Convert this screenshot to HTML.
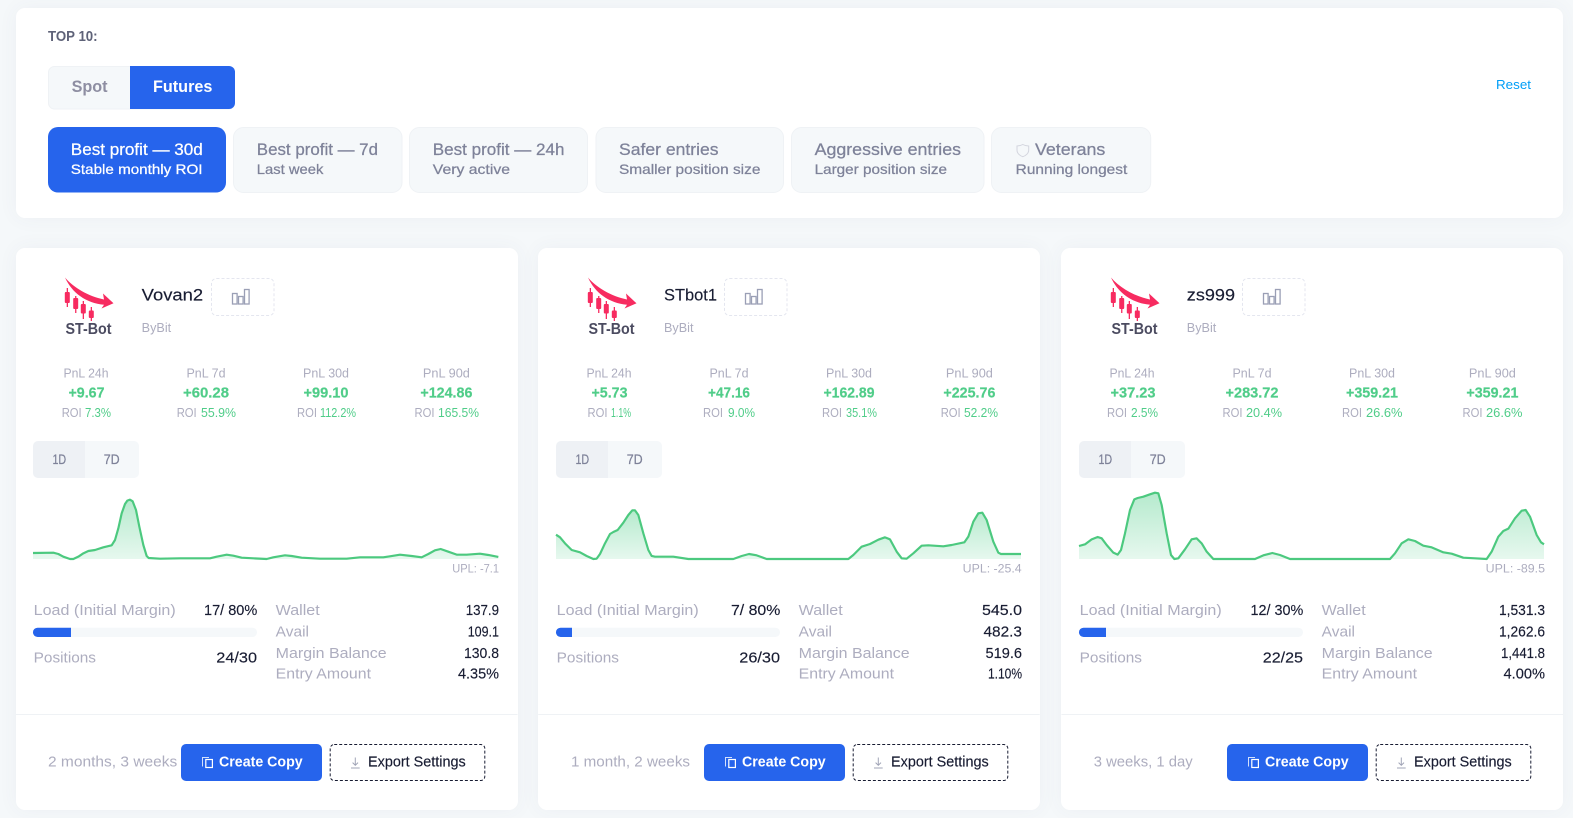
<!DOCTYPE html>
<html lang="en"><head><meta charset="utf-8"><title>Top 10</title>
<style>
html,body{margin:0;padding:0;width:1573px;height:818px;overflow:hidden;background:#f5f8fa}
.p{position:absolute;background:#fff;border-radius:9px;box-shadow:0 0 20px rgba(76,87,125,.05)}
svg{position:absolute;left:0;top:0}
text{font-family:"Liberation Sans",sans-serif;font-size:13px;fill:#adadbf}
.d{fill:#181c32;stroke:#181c32;stroke-width:.15}
.g{fill:#50cd89}
.b{font-weight:700}
.w{fill:#fff;stroke:#fff;stroke-width:.25}
.c{fill:#7e8299;stroke:#7e8299;stroke-width:.25}
.t{font-size:16.5px}
.s{font-size:14px}
.l{font-size:15px}
.v{font-size:15px;fill:#181c32;stroke:#181c32;stroke-width:.15}
.x{font-size:12.5px;text-anchor:middle}
.y{font-size:14.5px;font-weight:700;fill:#50cd89;stroke:#50cd89;stroke-width:.2;text-anchor:middle}
</style></head><body>
<div class="p" style="left:16px;top:8px;width:1547px;height:210px"></div>
<div class="p" style="left:16px;top:248px;width:501.5px;height:561.5px"></div>
<div class="p" style="left:538.2px;top:248px;width:501.5px;height:561.5px"></div>
<div class="p" style="left:1061.4px;top:248px;width:501.6px;height:561.5px"></div>
<svg width="1573" height="818" viewBox="0 0 1573 818" xmlns="http://www.w3.org/2000/svg">
<defs>
<linearGradient id="gr" x1="0" y1="0" x2="0" y2="1"><stop offset="0" stop-color="#50cd89" stop-opacity=".42"/><stop offset="1" stop-color="#50cd89" stop-opacity=".14"/></linearGradient>
<g id="logo">
<path d="M65 277.5C74 288 88 296 104 299.5L103 293.5L113.5 303.3L101.5 308.5L104 304.8C86 303 72 293 65 277.5Z" fill="#f72b60"/>
<g fill="#f72b60">
<rect x="64.8" y="292" width="5" height="11" rx="1"/><rect x="66.7" y="288" width="1.3" height="19"/>
<rect x="73.2" y="298" width="5" height="11" rx="1"/><rect x="75.1" y="296" width="1.3" height="17"/>
<rect x="80.8" y="304" width="5" height="9.5" rx="1"/><rect x="82.7" y="301" width="1.3" height="18"/>
<rect x="88.8" y="310.5" width="5" height="7.5" rx="1"/><rect x="90.7" y="307" width="1.3" height="14"/>
</g></g>
<g id="bars" fill="none" stroke="#9a9fb5" stroke-width="1.3">
<rect x="232.5" y="293.5" width="4.6" height="10.5"/><rect x="238.5" y="296.5" width="4.6" height="7.5"/><rect x="244.5" y="289.5" width="4.6" height="14.5"/>
</g>
<g id="foot">
<rect x="181" y="744" width="141" height="37" rx="5" fill="#2664ec"/>
<rect x="330.2" y="744.5" width="154.6" height="36" rx="4" fill="#fff" stroke="#181c32" stroke-width="1" stroke-dasharray="3 2"/>
<path d="M202.5 766.5V757.5H209" fill="none" stroke="#fff" stroke-width="1" opacity=".8"/>
<rect x="205.8" y="759.5" width="6.6" height="8" fill="none" stroke="#fff" stroke-width="1.2"/>
<path d="M355.3 757.5V765.2M352.6 762.6L355.3 765.3L358 762.6M351 768H359.7" fill="none" stroke="#a1a5b7" stroke-width="1"/>
</g>
</defs>

<!-- top panel -->
<text x="48" y="41" class="b" style="fill:#5e6278;font-size:14.5px" textLength="49.6" lengthAdjust="spacingAndGlyphs">TOP 10:</text>
<rect x="48.5" y="66.5" width="186" height="42.5" rx="6" fill="#f5f8fa" stroke="#eff2f5"/>
<path d="M130 66H229a6 6 0 0 1 6 6V103a6 6 0 0 1-6 6H130Z" fill="#2664ec"/>
<text x="71.6" y="92" class="b t" style="fill:#8e8ea2" textLength="36" lengthAdjust="spacingAndGlyphs">Spot</text>
<text x="153" y="92" class="b t" style="fill:#fff" textLength="59.4" lengthAdjust="spacingAndGlyphs">Futures</text>
<text x="1496" y="89" style="fill:#009ef7;font-size:13px" textLength="35" lengthAdjust="spacingAndGlyphs">Reset</text>

<rect x="48" y="127" width="178" height="65.5" rx="10" fill="#2664ec"/>
<text x="70.8" y="155" class="t w" textLength="132" lengthAdjust="spacingAndGlyphs">Best profit — 30d</text>
<text x="70.8" y="174" class="s w" textLength="131.7" lengthAdjust="spacingAndGlyphs">Stable monthly ROI</text>

<rect x="233.5" y="127.5" width="168.5" height="65" rx="10" fill="#f5f8fa" stroke="#eff2f5"/>
<text x="256.8" y="155" class="t c" textLength="121.2" lengthAdjust="spacingAndGlyphs">Best profit — 7d</text>
<text x="256.8" y="174" class="s c" textLength="66.6" lengthAdjust="spacingAndGlyphs">Last week</text>

<rect x="409.5" y="127.5" width="178" height="65" rx="10" fill="#f5f8fa" stroke="#eff2f5"/>
<text x="432.8" y="155" class="t c" textLength="131.7" lengthAdjust="spacingAndGlyphs">Best profit — 24h</text>
<text x="432.8" y="174" class="s c" textLength="77.2" lengthAdjust="spacingAndGlyphs">Very active</text>

<rect x="596" y="127.5" width="187.5" height="65" rx="10" fill="#f5f8fa" stroke="#eff2f5"/>
<text x="619" y="155" class="t c" textLength="99.5" lengthAdjust="spacingAndGlyphs">Safer entries</text>
<text x="619" y="174" class="s c" textLength="141.4" lengthAdjust="spacingAndGlyphs">Smaller position size</text>

<rect x="791.5" y="127.5" width="192.5" height="65" rx="10" fill="#f5f8fa" stroke="#eff2f5"/>
<text x="814.6" y="155" class="t c" textLength="146.4" lengthAdjust="spacingAndGlyphs">Aggressive entries</text>
<text x="814.6" y="174" class="s c" textLength="132.4" lengthAdjust="spacingAndGlyphs">Larger position size</text>

<rect x="991.5" y="127.5" width="159.2" height="65" rx="10" fill="#f5f8fa" stroke="#eff2f5"/>
<path d="M1022.8 144.5C1021 145.5 1019 146 1017 146V150C1017 153.5 1020 155.8 1022.8 156.7C1025.6 155.8 1028.7 153.5 1028.7 150V146C1026.6 146 1024.6 145.5 1022.8 144.5Z" fill="none" stroke="#d3d5de" stroke-width="1"/>
<text x="1035" y="155" class="t c" textLength="70.3" lengthAdjust="spacingAndGlyphs">Veterans</text>
<text x="1015.7" y="174" class="s c" textLength="111.6" lengthAdjust="spacingAndGlyphs">Running longest</text>

<!-- charts -->
<g transform="translate(20 430) scale(.33333)">
<path fill="url(#gr)" d="M39 387V369L100 368 115 372 130 380 150 387 160 387 175 380 190 370 205 363 225 360 250 352 275 346 285 330 295 295 305 250 315 222 322 212 330 209 338 214 348 240 358 290 370 345 380 378 386 384 420 386 480 385 570 385 590 380 620 374 640 377 665 383 700 385 740 387 760 382 795 376 815 378 845 383 900 386 980 386 1020 382 1090 382 1110 379 1140 374 1175 378 1205 382 1225 372 1245 361 1262 357 1285 365 1310 374 1340 374 1380 371 1405 375 1435 381V387Z"/>
<path fill="none" stroke="#4cc97f" stroke-width="6.5" stroke-linejoin="round" d="M39 369L100 368 115 372 130 380 150 387 160 387 175 380 190 370 205 363 225 360 250 352 275 346 285 330 295 295 305 250 315 222 322 212 330 209 338 214 348 240 358 290 370 345 380 378 386 384 420 386 480 385 570 385 590 380 620 374 640 377 665 383 700 385 740 387 760 382 795 376 815 378 845 383 900 386 980 386 1020 382 1090 382 1110 379 1140 374 1175 378 1205 382 1225 372 1245 361 1262 357 1285 365 1310 374 1340 374 1380 371 1405 375 1435 381"/>
</g>
<g transform="translate(545 430) scale(.33333)">
<path fill="url(#gr)" d="M33 387V314L45 322 60 340 80 360 105 367 125 378 145 387 155 386 165 372 180 340 195 312 205 306 218 300 235 278 250 255 262 241 270 241 280 255 295 310 310 360 320 378 330 380 385 380 430 387 565 387 590 378 612 372 635 376 665 387 910 387 925 375 950 350 975 342 1000 329 1020 322 1035 328 1055 365 1070 385 1085 386 1105 370 1130 347 1150 346 1195 349 1220 345 1258 337 1270 320 1285 275 1300 250 1312 248 1325 270 1345 335 1360 368 1368 372 1428 372V387Z"/>
<path fill="none" stroke="#4cc97f" stroke-width="6.5" stroke-linejoin="round" d="M33 314L45 322 60 340 80 360 105 367 125 378 145 387 155 386 165 372 180 340 195 312 205 306 218 300 235 278 250 255 262 241 270 241 280 255 295 310 310 360 320 378 330 380 385 380 430 387 565 387 590 378 612 372 635 376 665 387 910 387 925 375 950 350 975 342 1000 329 1020 322 1035 328 1055 365 1070 385 1085 386 1105 370 1130 347 1150 346 1195 349 1220 345 1258 337 1270 320 1285 275 1300 250 1312 248 1325 270 1345 335 1360 368 1368 372 1428 372"/>
</g>
<g transform="translate(1065 430) scale(.33333)">
<path fill="url(#gr)" d="M42 387V348L60 343 80 328 98 321 110 325 125 345 145 368 158 374 168 360 180 310 195 240 208 208 218 204 235 200 255 193 270 188 280 190 290 225 305 310 318 375 328 387 340 385 360 358 380 328 395 325 410 340 425 365 445 387 570 387 595 376 622 369 645 375 675 387 975 387 990 370 1010 340 1030 328 1050 333 1075 347 1100 352 1135 367 1160 371 1195 383 1230 385 1265 387 1280 365 1300 320 1315 303 1330 296 1350 265 1370 242 1382 240 1395 260 1415 315 1428 337 1437 343V387Z"/>
<path fill="none" stroke="#4cc97f" stroke-width="6.5" stroke-linejoin="round" d="M42 348L60 343 80 328 98 321 110 325 125 345 145 368 158 374 168 360 180 310 195 240 208 208 218 204 235 200 255 193 270 188 280 190 290 225 305 310 318 375 328 387 340 385 360 358 380 328 395 325 410 340 425 365 445 387 570 387 595 376 622 369 645 375 675 387 975 387 990 370 1010 340 1030 328 1050 333 1075 347 1100 352 1135 367 1160 371 1195 383 1230 385 1265 387 1280 365 1300 320 1315 303 1330 296 1350 265 1370 242 1382 240 1395 260 1415 315 1428 337 1437 343"/>
</g>

<!-- card 1 -->
<g>
<use href="#logo"/>
<text x="65.5" y="334" class="b" style="fill:#4b4b60;font-size:15.5px" textLength="46" lengthAdjust="spacingAndGlyphs">ST-Bot</text>
<text x="141.7" y="300.5" class="d" style="font-size:17px" textLength="61.5" lengthAdjust="spacingAndGlyphs">Vovan2</text>
<text x="141.7" y="332" style="font-size:12.5px" textLength="29.5" lengthAdjust="spacingAndGlyphs">ByBit</text>
<rect x="211.5" y="278.5" width="62.5" height="37" rx="5" fill="#fff" stroke="#e4e6ef" stroke-dasharray="3 2"/>
<use href="#bars"/>

<text x="86" y="377.7" class="x" textLength="45" lengthAdjust="spacingAndGlyphs">PnL 24h</text>
<text x="206" y="377.7" class="x" textLength="39" lengthAdjust="spacingAndGlyphs">PnL 7d</text>
<text x="326" y="377.7" class="x" textLength="46" lengthAdjust="spacingAndGlyphs">PnL 30d</text>
<text x="446.4" y="377.7" class="x" textLength="47" lengthAdjust="spacingAndGlyphs">PnL 90d</text>
<text x="86.5" y="397.7" class="y" textLength="36" lengthAdjust="spacingAndGlyphs">+9.67</text>
<text x="206" y="397.7" class="y" textLength="46" lengthAdjust="spacingAndGlyphs">+60.28</text>
<text x="326" y="397.7" class="y" textLength="45" lengthAdjust="spacingAndGlyphs">+99.10</text>
<text x="446.4" y="397.7" class="y" textLength="52" lengthAdjust="spacingAndGlyphs">+124.86</text>
<text x="61.7" y="417" style="font-size:12.5px" textLength="20" lengthAdjust="spacingAndGlyphs">ROI</text><text x="85" y="417" class="g" style="font-size:12.5px" textLength="26" lengthAdjust="spacingAndGlyphs">7.3%</text>
<text x="176.7" y="417" style="font-size:12.5px" textLength="20" lengthAdjust="spacingAndGlyphs">ROI</text><text x="201" y="417" class="g" style="font-size:12.5px" textLength="35" lengthAdjust="spacingAndGlyphs">55.9%</text>
<text x="297" y="417" style="font-size:12.5px" textLength="20" lengthAdjust="spacingAndGlyphs">ROI</text><text x="320" y="417" class="g" style="font-size:12.5px" textLength="36" lengthAdjust="spacingAndGlyphs">112.2%</text>
<text x="414.5" y="417" style="font-size:12.5px" textLength="20" lengthAdjust="spacingAndGlyphs">ROI</text><text x="438" y="417" class="g" style="font-size:12.5px" textLength="41" lengthAdjust="spacingAndGlyphs">165.5%</text>

<path d="M85 441H38a5 5 0 0 0-5 5V473a5 5 0 0 0 5 5H85Z" fill="#eef1f5"/>
<path d="M85 441H134a5 5 0 0 1 5 5V473a5 5 0 0 1-5 5H85Z" fill="#f5f8fa"/>
<text x="59.3" y="464" class="c" style="font-size:14px;text-anchor:middle" textLength="13.7" lengthAdjust="spacingAndGlyphs">1D</text>
<text x="111.7" y="464" class="c" style="font-size:14px;text-anchor:middle" textLength="16" lengthAdjust="spacingAndGlyphs">7D</text>
<text x="452.3" y="572.7" style="font-size:12px" textLength="46.7" lengthAdjust="spacingAndGlyphs">UPL: -7.1</text>

<text x="33.7" y="615" class="l" textLength="142" lengthAdjust="spacingAndGlyphs">Load (Initial Margin)</text>
<text x="204" y="615" class="v" textLength="53.3" lengthAdjust="spacingAndGlyphs">17/ 80%</text>
<rect x="33" y="627.7" width="224" height="9.3" rx="4.6" fill="#f5f8fa"/>
<path d="M71 627.7H37.6a4.6 4.6 0 0 0 0 9.3H71Z" fill="#2664ec"/>
<text x="33.7" y="662.7" class="l" textLength="62.3" lengthAdjust="spacingAndGlyphs">Positions</text>
<text x="216.3" y="662.7" class="v" textLength="40.7" lengthAdjust="spacingAndGlyphs">24/30</text>
<text x="275.7" y="615" class="l" textLength="44" lengthAdjust="spacingAndGlyphs">Wallet</text>
<text x="275.7" y="636.3" class="l" textLength="33.3" lengthAdjust="spacingAndGlyphs">Avail</text>
<text x="275.7" y="658" class="l" textLength="111" lengthAdjust="spacingAndGlyphs">Margin Balance</text>
<text x="275.7" y="678.7" class="l" textLength="95.3" lengthAdjust="spacingAndGlyphs">Entry Amount</text>
<text x="465.7" y="615" class="v" textLength="33.3" lengthAdjust="spacingAndGlyphs">137.9</text>
<text x="467.7" y="636.3" class="v" textLength="31.3" lengthAdjust="spacingAndGlyphs">109.1</text>
<text x="464" y="658" class="v" textLength="35" lengthAdjust="spacingAndGlyphs">130.8</text>
<text x="458" y="678.7" class="v" textLength="41" lengthAdjust="spacingAndGlyphs">4.35%</text>
<rect x="16" y="714" width="501.5" height="1" fill="#eff2f5"/>
<text x="48" y="766.7" class="l" textLength="129.3" lengthAdjust="spacingAndGlyphs">2 months, 3 weeks</text>
<use href="#foot"/>
<text x="219" y="766.7" class="b" style="fill:#fff;font-size:14.5px" textLength="83.7" lengthAdjust="spacingAndGlyphs">Create Copy</text>
<text x="368" y="766.7" class="d" style="font-size:14.5px" textLength="97.7" lengthAdjust="spacingAndGlyphs">Export Settings</text>
</g>

<!-- card 2 -->
<g transform="translate(523 0)">
<use href="#logo"/>
<text x="65.5" y="334" class="b" style="fill:#4b4b60;font-size:15.5px" textLength="46" lengthAdjust="spacingAndGlyphs">ST-Bot</text>
<text x="141" y="300.5" class="d" style="font-size:17px" textLength="53" lengthAdjust="spacingAndGlyphs">STbot1</text>
<text x="141" y="332" style="font-size:12.5px" textLength="29.5" lengthAdjust="spacingAndGlyphs">ByBit</text>
<rect x="201.5" y="278.5" width="62.5" height="37" rx="5" fill="#fff" stroke="#e4e6ef" stroke-dasharray="3 2"/>
<use href="#bars" x="-10"/>

<text x="86" y="377.7" class="x" textLength="45" lengthAdjust="spacingAndGlyphs">PnL 24h</text>
<text x="206" y="377.7" class="x" textLength="39" lengthAdjust="spacingAndGlyphs">PnL 7d</text>
<text x="326" y="377.7" class="x" textLength="46" lengthAdjust="spacingAndGlyphs">PnL 30d</text>
<text x="446.4" y="377.7" class="x" textLength="47" lengthAdjust="spacingAndGlyphs">PnL 90d</text>
<text x="86.5" y="397.7" class="y" textLength="36" lengthAdjust="spacingAndGlyphs">+5.73</text>
<text x="206" y="397.7" class="y" textLength="42" lengthAdjust="spacingAndGlyphs">+47.16</text>
<text x="326" y="397.7" class="y" textLength="51" lengthAdjust="spacingAndGlyphs">+162.89</text>
<text x="446.4" y="397.7" class="y" textLength="52" lengthAdjust="spacingAndGlyphs">+225.76</text>
<text x="64.5" y="417" style="font-size:12.5px" textLength="20" lengthAdjust="spacingAndGlyphs">ROI</text><text x="88" y="417" class="g" style="font-size:12.5px" textLength="20" lengthAdjust="spacingAndGlyphs">1.1%</text>
<text x="180" y="417" style="font-size:12.5px" textLength="20" lengthAdjust="spacingAndGlyphs">ROI</text><text x="205" y="417" class="g" style="font-size:12.5px" textLength="27" lengthAdjust="spacingAndGlyphs">9.0%</text>
<text x="299" y="417" style="font-size:12.5px" textLength="20" lengthAdjust="spacingAndGlyphs">ROI</text><text x="323" y="417" class="g" style="font-size:12.5px" textLength="31" lengthAdjust="spacingAndGlyphs">35.1%</text>
<text x="417.7" y="417" style="font-size:12.5px" textLength="20" lengthAdjust="spacingAndGlyphs">ROI</text><text x="441" y="417" class="g" style="font-size:12.5px" textLength="34" lengthAdjust="spacingAndGlyphs">52.2%</text>

<path d="M85 441H38a5 5 0 0 0-5 5V473a5 5 0 0 0 5 5H85Z" fill="#eef1f5"/>
<path d="M85 441H134a5 5 0 0 1 5 5V473a5 5 0 0 1-5 5H85Z" fill="#f5f8fa"/>
<text x="59.3" y="464" class="c" style="font-size:14px;text-anchor:middle" textLength="13.7" lengthAdjust="spacingAndGlyphs">1D</text>
<text x="111.7" y="464" class="c" style="font-size:14px;text-anchor:middle" textLength="16" lengthAdjust="spacingAndGlyphs">7D</text>
<text x="439.7" y="572.7" style="font-size:12px" textLength="59" lengthAdjust="spacingAndGlyphs">UPL: -25.4</text>

<text x="33.7" y="615" class="l" textLength="142" lengthAdjust="spacingAndGlyphs">Load (Initial Margin)</text>
<text x="208" y="615" class="v" textLength="49.3" lengthAdjust="spacingAndGlyphs">7/ 80%</text>
<rect x="33" y="627.7" width="224" height="9.3" rx="4.6" fill="#f5f8fa"/>
<path d="M49 627.7H37.6a4.6 4.6 0 0 0 0 9.3H49Z" fill="#2664ec"/>
<text x="33.7" y="662.7" class="l" textLength="62.3" lengthAdjust="spacingAndGlyphs">Positions</text>
<text x="216.3" y="662.7" class="v" textLength="40.7" lengthAdjust="spacingAndGlyphs">26/30</text>
<text x="275.7" y="615" class="l" textLength="44" lengthAdjust="spacingAndGlyphs">Wallet</text>
<text x="275.7" y="636.3" class="l" textLength="33.3" lengthAdjust="spacingAndGlyphs">Avail</text>
<text x="275.7" y="658" class="l" textLength="111" lengthAdjust="spacingAndGlyphs">Margin Balance</text>
<text x="275.7" y="678.7" class="l" textLength="95.3" lengthAdjust="spacingAndGlyphs">Entry Amount</text>
<text x="459" y="615" class="v" textLength="40" lengthAdjust="spacingAndGlyphs">545.0</text>
<text x="460.5" y="636.3" class="v" textLength="38.5" lengthAdjust="spacingAndGlyphs">482.3</text>
<text x="462.5" y="658" class="v" textLength="36.5" lengthAdjust="spacingAndGlyphs">519.6</text>
<text x="465" y="678.7" class="v" textLength="34" lengthAdjust="spacingAndGlyphs">1.10%</text>
<rect x="15.2" y="714" width="501.5" height="1" fill="#eff2f5"/>
<text x="48" y="766.7" class="l" textLength="119" lengthAdjust="spacingAndGlyphs">1 month, 2 weeks</text>
<use href="#foot"/>
<text x="219" y="766.7" class="b" style="fill:#fff;font-size:14.5px" textLength="83.7" lengthAdjust="spacingAndGlyphs">Create Copy</text>
<text x="368" y="766.7" class="d" style="font-size:14.5px" textLength="97.7" lengthAdjust="spacingAndGlyphs">Export Settings</text>
</g>

<!-- card 3 -->
<g transform="translate(1046 0)">
<use href="#logo"/>
<text x="65.5" y="334" class="b" style="fill:#4b4b60;font-size:15.5px" textLength="46" lengthAdjust="spacingAndGlyphs">ST-Bot</text>
<text x="140.8" y="300.5" class="d" style="font-size:17px" textLength="48.2" lengthAdjust="spacingAndGlyphs">zs999</text>
<text x="140.8" y="332" style="font-size:12.5px" textLength="29.5" lengthAdjust="spacingAndGlyphs">ByBit</text>
<rect x="196.5" y="278.5" width="62.5" height="37" rx="5" fill="#fff" stroke="#e4e6ef" stroke-dasharray="3 2"/>
<use href="#bars" x="-15"/>

<text x="86" y="377.7" class="x" textLength="45" lengthAdjust="spacingAndGlyphs">PnL 24h</text>
<text x="206" y="377.7" class="x" textLength="39" lengthAdjust="spacingAndGlyphs">PnL 7d</text>
<text x="326" y="377.7" class="x" textLength="46" lengthAdjust="spacingAndGlyphs">PnL 30d</text>
<text x="446.4" y="377.7" class="x" textLength="47" lengthAdjust="spacingAndGlyphs">PnL 90d</text>
<text x="87" y="397.7" class="y" textLength="45" lengthAdjust="spacingAndGlyphs">+37.23</text>
<text x="206" y="397.7" class="y" textLength="53" lengthAdjust="spacingAndGlyphs">+283.72</text>
<text x="326" y="397.7" class="y" textLength="52" lengthAdjust="spacingAndGlyphs">+359.21</text>
<text x="446.4" y="397.7" class="y" textLength="52" lengthAdjust="spacingAndGlyphs">+359.21</text>
<text x="61" y="417" style="font-size:12.5px" textLength="20" lengthAdjust="spacingAndGlyphs">ROI</text><text x="85" y="417" class="g" style="font-size:12.5px" textLength="27" lengthAdjust="spacingAndGlyphs">2.5%</text>
<text x="176.5" y="417" style="font-size:12.5px" textLength="20" lengthAdjust="spacingAndGlyphs">ROI</text><text x="200" y="417" class="g" style="font-size:12.5px" textLength="36" lengthAdjust="spacingAndGlyphs">20.4%</text>
<text x="296" y="417" style="font-size:12.5px" textLength="20" lengthAdjust="spacingAndGlyphs">ROI</text><text x="320" y="417" class="g" style="font-size:12.5px" textLength="36.5" lengthAdjust="spacingAndGlyphs">26.6%</text>
<text x="416.5" y="417" style="font-size:12.5px" textLength="20" lengthAdjust="spacingAndGlyphs">ROI</text><text x="440" y="417" class="g" style="font-size:12.5px" textLength="36.5" lengthAdjust="spacingAndGlyphs">26.6%</text>

<path d="M85 441H38a5 5 0 0 0-5 5V473a5 5 0 0 0 5 5H85Z" fill="#eef1f5"/>
<path d="M85 441H134a5 5 0 0 1 5 5V473a5 5 0 0 1-5 5H85Z" fill="#f5f8fa"/>
<text x="59.3" y="464" class="c" style="font-size:14px;text-anchor:middle" textLength="13.7" lengthAdjust="spacingAndGlyphs">1D</text>
<text x="111.7" y="464" class="c" style="font-size:14px;text-anchor:middle" textLength="16" lengthAdjust="spacingAndGlyphs">7D</text>
<text x="439.7" y="572.7" style="font-size:12px" textLength="59.3" lengthAdjust="spacingAndGlyphs">UPL: -89.5</text>

<text x="33.7" y="615" class="l" textLength="142" lengthAdjust="spacingAndGlyphs">Load (Initial Margin)</text>
<text x="204.5" y="615" class="v" textLength="52.8" lengthAdjust="spacingAndGlyphs">12/ 30%</text>
<rect x="33" y="627.7" width="224" height="9.3" rx="4.6" fill="#f5f8fa"/>
<path d="M60 627.7H37.6a4.6 4.6 0 0 0 0 9.3H60Z" fill="#2664ec"/>
<text x="33.7" y="662.7" class="l" textLength="62.3" lengthAdjust="spacingAndGlyphs">Positions</text>
<text x="216.8" y="662.7" class="v" textLength="40.2" lengthAdjust="spacingAndGlyphs">22/25</text>
<text x="275.7" y="615" class="l" textLength="44" lengthAdjust="spacingAndGlyphs">Wallet</text>
<text x="275.7" y="636.3" class="l" textLength="33.3" lengthAdjust="spacingAndGlyphs">Avail</text>
<text x="275.7" y="658" class="l" textLength="111" lengthAdjust="spacingAndGlyphs">Margin Balance</text>
<text x="275.7" y="678.7" class="l" textLength="95.3" lengthAdjust="spacingAndGlyphs">Entry Amount</text>
<text x="453" y="615" class="v" textLength="46" lengthAdjust="spacingAndGlyphs">1,531.3</text>
<text x="453" y="636.3" class="v" textLength="46" lengthAdjust="spacingAndGlyphs">1,262.6</text>
<text x="455" y="658" class="v" textLength="44" lengthAdjust="spacingAndGlyphs">1,441.8</text>
<text x="457.5" y="678.7" class="v" textLength="41.5" lengthAdjust="spacingAndGlyphs">4.00%</text>
<rect x="15.4" y="714" width="501.6" height="1" fill="#eff2f5"/>
<text x="47.7" y="766.7" class="l" textLength="99" lengthAdjust="spacingAndGlyphs">3 weeks, 1 day</text>
<use href="#foot"/>
<text x="219" y="766.7" class="b" style="fill:#fff;font-size:14.5px" textLength="83.7" lengthAdjust="spacingAndGlyphs">Create Copy</text>
<text x="368" y="766.7" class="d" style="font-size:14.5px" textLength="97.7" lengthAdjust="spacingAndGlyphs">Export Settings</text>
</g>
</svg>
</body></html>
